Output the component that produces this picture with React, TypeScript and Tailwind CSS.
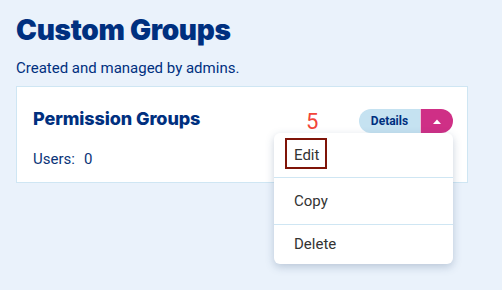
import React from "react";

export default function App() {
  return (
    <div className="relative w-[502px] h-[290px] overflow-hidden bg-[#eaf2fb] px-4 pt-[12px]" style={{ fontFamily: "Roboto, 'Liberation Sans', sans-serif" }}>
      <h1 className="text-[28px] leading-[36px] font-black text-[#00307f] tracking-[-0.3px]" style={{ fontFamily: "Inter, 'Liberation Sans', sans-serif" }}>
        Custom Groups
      </h1>
      <p className="mt-[11px] text-[15px] leading-[18px] text-[#00307f]">Created and managed by admins.</p>
      <div className="relative mt-[9px] w-[452px] h-[97px] bg-white border border-[#cfe6f3] pl-[16px] pr-[14px] pt-[20px]">
        <div className="flex items-start justify-between">
          <div className="text-[18px] leading-[24px] font-extrabold text-[#00307f] tracking-[-0.1px]" style={{ fontFamily: "Inter, 'Liberation Sans', sans-serif" }}>
            Permission Groups
          </div>
          <div className="flex h-[24px] mt-[2px] rounded-full overflow-hidden">
            <div className="w-[61px] bg-[#c5e2f1] flex items-center justify-center text-[12px] font-bold text-[#00307f]">Details</div>
            <div className="w-[33px] bg-[#cf2f86] border-l border-[#e9c6dc] flex items-center justify-center">
              <svg width="8" height="5" viewBox="0 0 8 5"><path d="M0 5 L4 0.5 L8 5 Z" fill="white" /></svg>
            </div>
          </div>
        </div>
        <div className="mt-[17px] text-[15px] leading-[18px] text-[#0a3478]">
          Users:<span className="ml-[9px]">0</span>
        </div>
      </div>

      <div className="absolute left-[274px] top-[133px] w-[179px] bg-white rounded-[6px] shadow-[0_3px_8px_rgba(60,90,130,0.28)] text-[15px] text-[#333]">
        <div className="h-[45px] pl-[20px] flex items-center border-b border-[#cfe6f3]">Edit</div>
        <div className="h-[47px] pl-[20px] flex items-center border-b border-[#cfe6f3]">Copy</div>
        <div className="h-[39px] pl-[20px] flex items-center">Delete</div>
      </div>

      <div className="absolute left-[306px] top-[110px] text-[22px] leading-[24px] text-[#f2453a]" style={{ fontFamily: "Roboto, 'Liberation Sans', sans-serif" }}>5</div>
      <div className="absolute left-[285px] top-[138px] w-[42px] h-[31px] border-[2px] border-[#7f1408]" />
    </div>
  );
}
